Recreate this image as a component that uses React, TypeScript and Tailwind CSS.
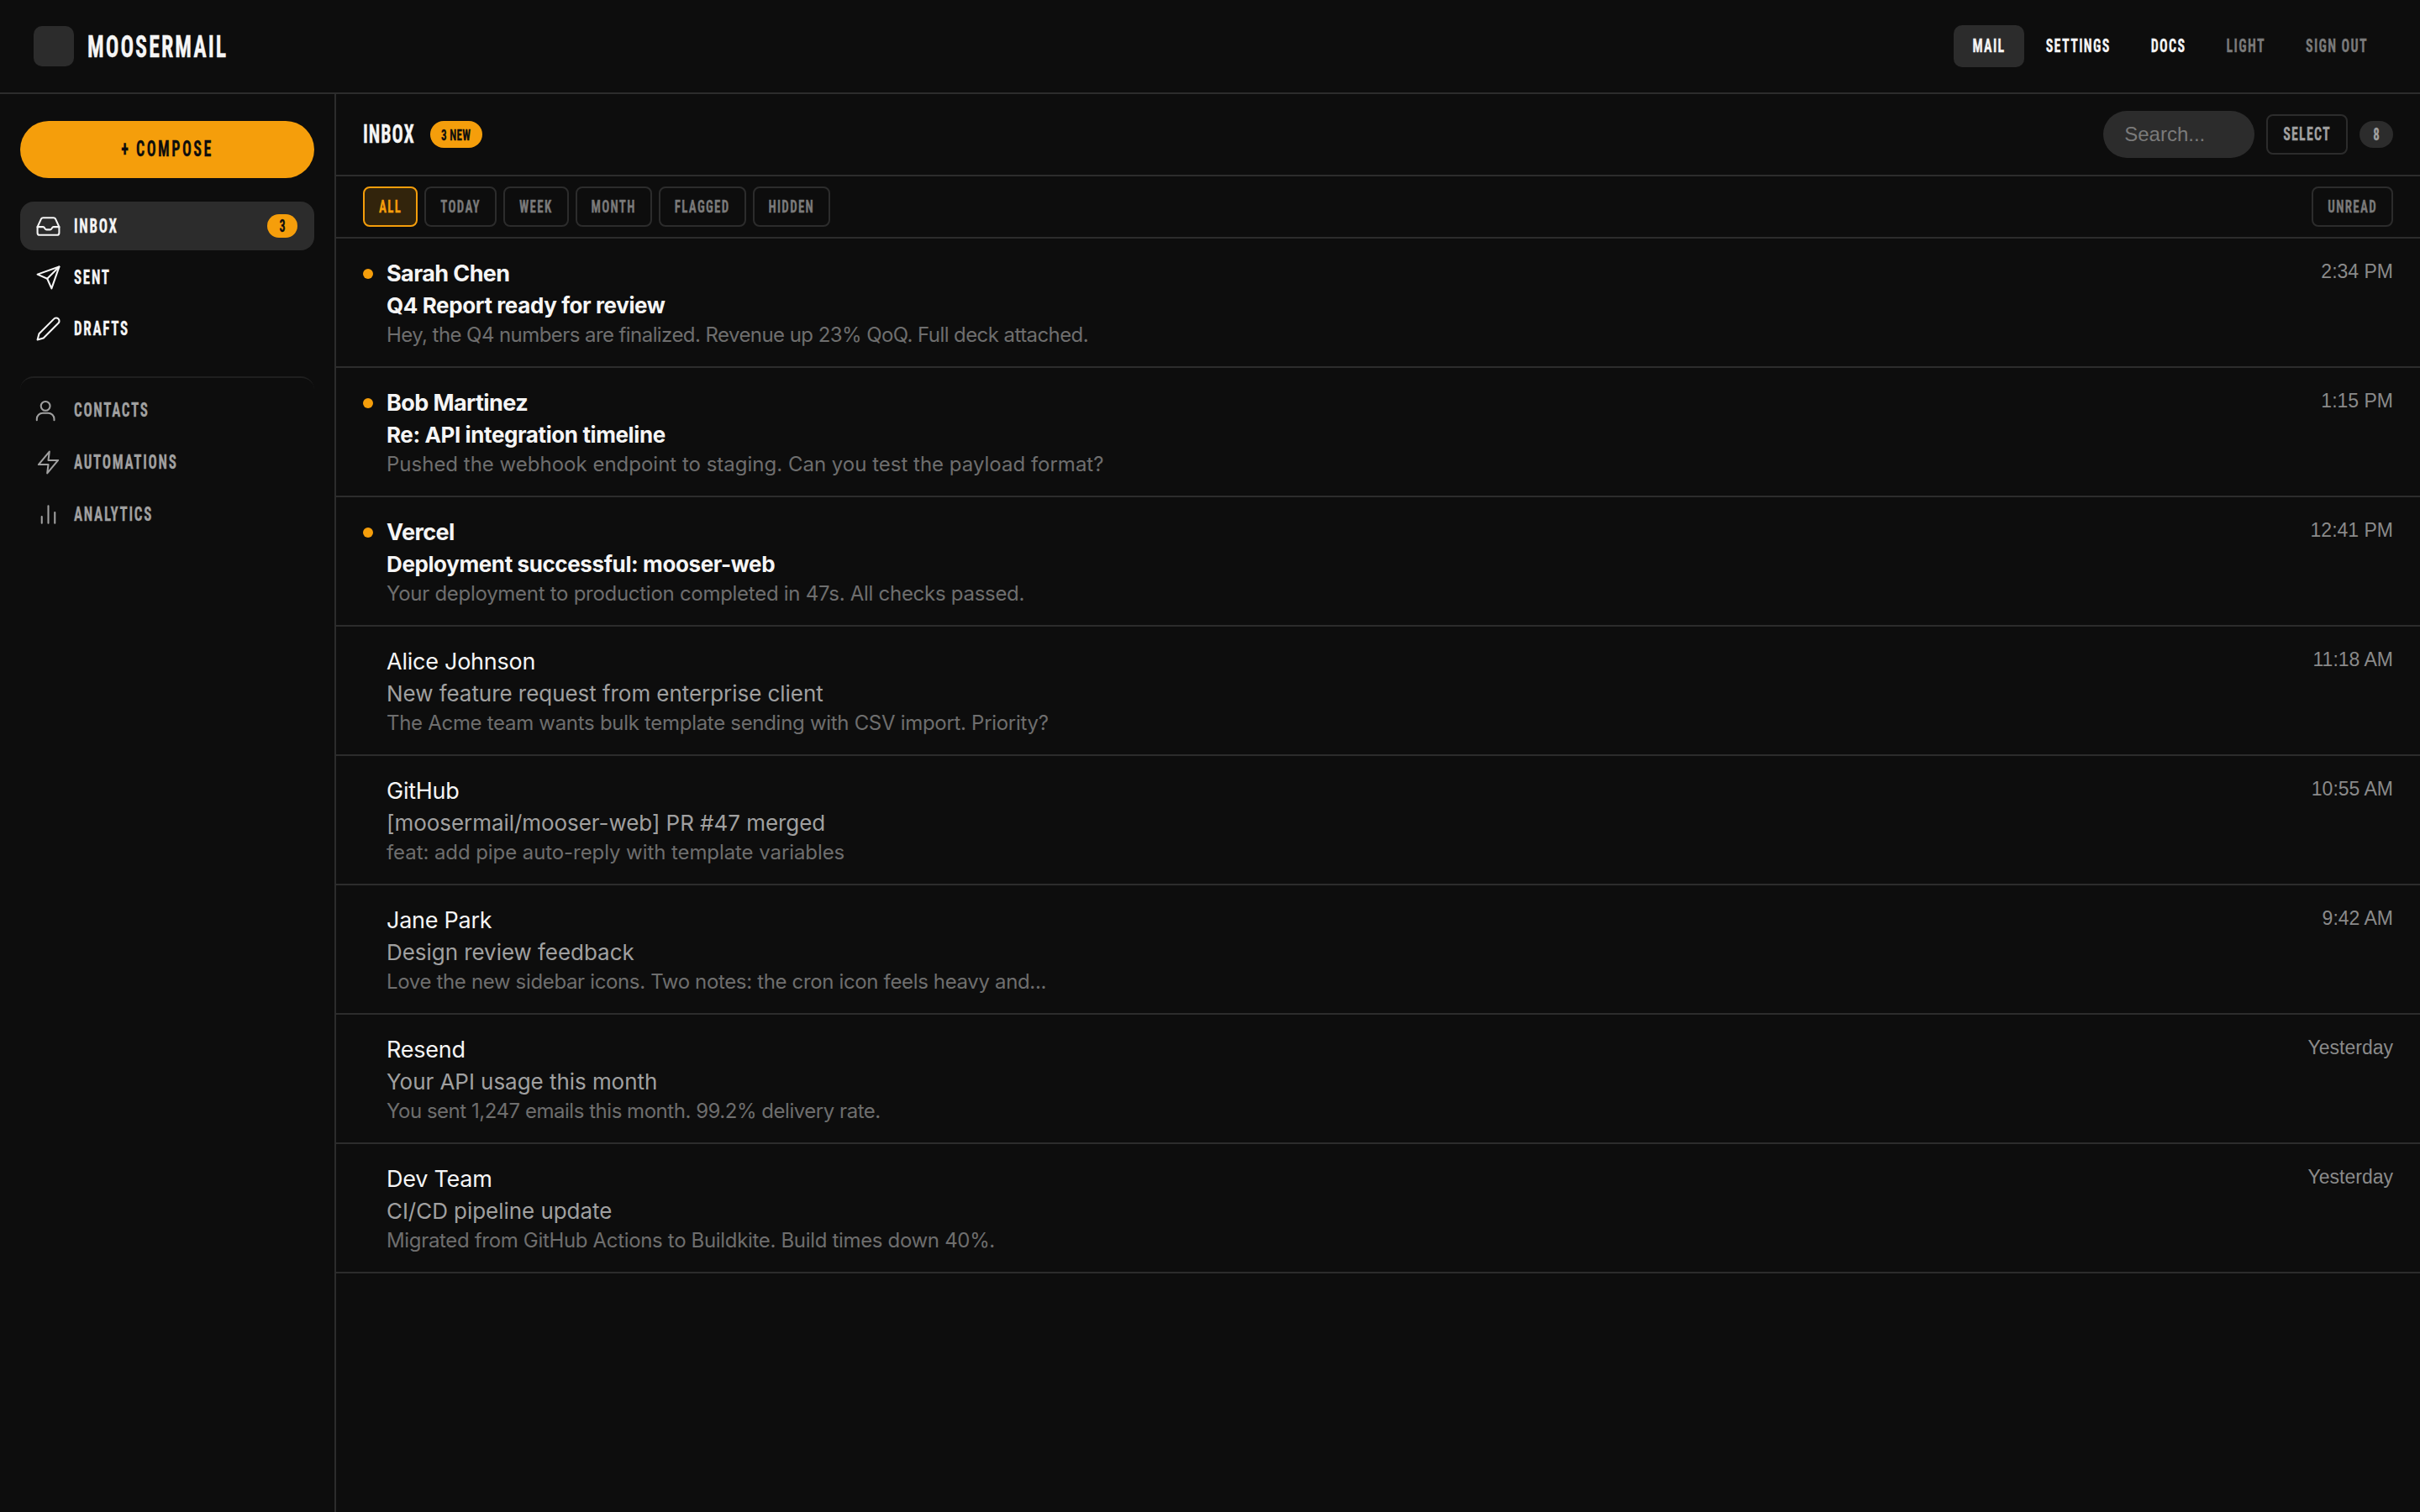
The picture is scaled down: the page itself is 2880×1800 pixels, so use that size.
import type { ReactNode } from 'react'

// condensed caps, stretched vertically to get the tall poster look
function Cap({ className, children }: { className: string; children: ReactNode }) {
  return (
    <span className={`inline-block origin-center scale-y-[1.4] whitespace-nowrap font-['Roboto_Condensed','Roboto',sans-serif] font-bold uppercase leading-none font-stretch-condensed [-webkit-text-stroke:0.2px_currentColor] ${className}`}>
      {children}
    </span>
  )
}

const topNav = [
  { label: 'Mail', cls: 'bg-[#2c2c2c] text-[#f5f5f5]' },
  { label: 'Settings', cls: 'text-[#f5f5f5]' },
  { label: 'Docs', cls: 'text-[#f5f5f5]' },
  { label: 'Light', cls: 'text-[#7a7a7a]' },
  { label: 'Sign out', cls: 'text-[#7a7a7a]' },
]

const filters = ['Today', 'Week', 'Month', 'Flagged', 'Hidden']

const mails = [
  { from: 'Sarah Chen', subject: 'Q4 Report ready for review', preview: 'Hey, the Q4 numbers are finalized. Revenue up 23% QoQ. Full deck attached.', time: '2:34 PM', unread: true, fit: 'tracking-[-0.57px]' },
  { from: 'Bob Martinez', subject: 'Re: API integration timeline', preview: 'Pushed the webhook endpoint to staging. Can you test the payload format?', time: '1:15 PM', unread: true, fit: 'tracking-[0px]' },
  { from: 'Vercel', subject: 'Deployment successful: mooser-web', preview: 'Your deployment to production completed in 47s. All checks passed.', time: '12:41 PM', unread: true, fit: 'tracking-[-0.28px]' },
  { from: 'Alice Johnson', subject: 'New feature request from enterprise client', preview: 'The Acme team wants bulk template sending with CSV import. Priority?', time: '11:18 AM', unread: false, fit: 'tracking-[-0.3px]' },
  { from: 'GitHub', subject: '[moosermail/mooser-web] PR #47 merged', preview: 'feat: add pipe auto-reply with template variables', time: '10:55 AM', unread: false, fit: 'tracking-[-0.08px]' },
  { from: 'Jane Park', subject: 'Design review feedback', preview: 'Love the new sidebar icons. Two notes: the cron icon feels heavy and...', time: '9:42 AM', unread: false, fit: 'tracking-[-0.35px]' },
  { from: 'Resend', subject: 'Your API usage this month', preview: 'You sent 1,247 emails this month. 99.2% delivery rate.', time: 'Yesterday', unread: false, fit: 'tracking-[-0.47px]' },
  { from: 'Dev Team', subject: 'CI/CD pipeline update', preview: 'Migrated from GitHub Actions to Buildkite. Build times down 40%.', time: 'Yesterday', unread: false, fit: 'tracking-[-0.33px]' },
]

function Icon({ children }: { children: ReactNode }) {
  return (
    <svg width="31" height="31" viewBox="0 0 24 24" fill="none" stroke="currentColor" strokeWidth="1.6" strokeLinecap="round" strokeLinejoin="round">
      {children}
    </svg>
  )
}

const icons = {
  inbox: <Icon><path d="M2 12.5h5.2c.6 0 1 .3 1.3.8l.5.9c.3.5.8.8 1.3.8h3.4c.5 0 1-.3 1.3-.8l.5-.9c.3-.5.7-.8 1.3-.8H22" /><path d="M5.4 5.1 2 12.5V18a2 2 0 0 0 2 2h16a2 2 0 0 0 2-2v-5.5l-3.4-7.4A2 2 0 0 0 16.8 4H7.2a2 2 0 0 0-1.8 1.1z" /></Icon>,
  send: <Icon><path d="M22 2 11 13" /><path d="M22 2 15 22 11 13 2 9z" /></Icon>,
  pencil: <Icon><path d="M17 3a2.85 2.85 0 1 1 4 4L7.5 20.5 2 22l1.5-5.5L17 3z" /></Icon>,
  user: <Icon><circle cx="9.4" cy="8" r="4.2" /><path d="M1.4 21v-1a5.5 5.5 0 0 1 5.5-5.5h5a5.5 5.5 0 0 1 5.5 5.5v1" /></Icon>,
  zap: <Icon><path d="M13 2 3 14h9l-1 8 10-12h-9z" /></Icon>,
  bars: <Icon><path d="M18 20V10M12 20V4M6 20v-6" /></Icon>,
}

function NavItem({ icon, label, muted, active, badge }: { icon: ReactNode; label: string; muted?: boolean; active?: boolean; badge?: string }) {
  const color = muted ? 'text-[#a0a0a0]' : 'text-[#f5f5f5]'
  return (
    <div className={`flex h-[58px] items-center rounded-[16px] pl-[18px] pr-[20px] ${active ? 'bg-[#2c2c2c]' : ''}`}>
      <span className={`flex w-[46px] ${color}`}>{icon}</span>
      <Cap className={`text-[17px] tracking-[1.7px] ${color}`}>{label}</Cap>
      {badge && (
        <span className="ml-auto flex h-[28px] w-[36px] items-center justify-center rounded-full bg-[#f59e0b]">
          <Cap className="text-[14px] text-[#0d0d0d]">{badge}</Cap>
        </span>
      )}
    </div>
  )
}

function Chip({ children, active }: { children: string; active?: boolean }) {
  return (
    <span className={`flex h-[48px] items-center rounded-[8px] border-2 px-[17px] ${active ? 'border-[#f59e0b] bg-[#32240c]' : 'border-[#2c2c2c]'}`}>
      <Cap className={`text-[15px] tracking-[1.3px] ${active ? 'text-[#f59e0b]' : 'text-[#7a7a7a]'}`}>{children}</Cap>
    </span>
  )
}

export default function App() {
  return (
    <div className="flex h-[1800px] w-[2880px] flex-col overflow-hidden bg-[#0d0d0d] font-['Inter','Liberation_Sans',sans-serif]">
      <header className="flex h-[112px] shrink-0 items-center justify-between border-b-2 border-[#2c2c2c] pl-[40px] pr-[40px]">
        <div className="flex items-center gap-[16px]">
          <div className="h-[48px] w-[48px] rounded-[10px] bg-[#2c2c2c]" />
          <Cap className="text-[26px] tracking-[2px] text-[#f5f5f5]">MooserMail</Cap>
        </div>
        <nav className="flex items-center gap-[4px]">
          {topNav.map(n => (
            <span key={n.label} className={`flex h-[50px] items-center rounded-[10px] px-[22px] ${n.cls}`}>
              <Cap className="text-[16px] tracking-[1.35px]">{n.label}</Cap>
            </span>
          ))}
        </nav>
      </header>

      <div className="flex min-h-0 flex-1">
        <aside className="flex w-[400px] shrink-0 flex-col border-r-2 border-[#2c2c2c] px-[24px] pt-[32px]">
          <button className="flex h-[68px] items-center justify-center rounded-full bg-[#f59e0b]">
            <Cap className="text-[18px] tracking-[2.5px] text-[#0d0d0d]">+ Compose</Cap>
          </button>
          <div className="mt-[28px] flex flex-col gap-[3px]">
            <NavItem active label="Inbox" badge="3" icon={icons.inbox} />
            <NavItem label="Sent" icon={icons.send} />
            <NavItem label="Drafts" icon={icons.pencil} />
          </div>
          <div className="mt-[28px] flex flex-col gap-[4px] rounded-t-[16px] border-t-2 border-[#1f1f1f] pt-[9px]">
            <NavItem muted label="Contacts" icon={icons.user} />
            <NavItem muted label="Automations" icon={icons.zap} />
            <NavItem muted label="Analytics" icon={icons.bars} />
          </div>
        </aside>

        <main className="flex min-w-0 flex-1 flex-col">
          <div className="flex h-[98px] shrink-0 items-center justify-between border-b-2 border-[#2c2c2c] px-[32px]">
            <div className="flex items-center gap-[18px]">
              <Cap className="text-[22px] tracking-[0.9px] text-[#f5f5f5]">Inbox</Cap>
              <span className="flex h-[32px] w-[62px] items-center justify-center rounded-full bg-[#f59e0b]">
                <Cap className="text-[13px] tracking-[0.3px] text-[#0d0d0d]">3 new</Cap>
              </span>
            </div>
            <div className="flex items-center gap-[14px]">
              <div className="flex h-[56px] w-[180px] items-center rounded-full bg-[#2c2c2c] px-[25px] font-['Liberation_Sans',sans-serif] text-[24px] text-[#7a7a7a]">Search...</div>
              <span className="flex h-[48px] items-center rounded-[8px] border-2 border-[#2c2c2c] px-[18px]">
                <Cap className="text-[16px] tracking-[1.2px] text-[#a0a0a0]">Select</Cap>
              </span>
              <span className="flex h-[32px] w-[40px] items-center justify-center rounded-full bg-[#2c2c2c]">
                <Cap className="text-[15px] text-[#a0a0a0]">8</Cap>
              </span>
            </div>
          </div>

          <div className="flex h-[74px] shrink-0 items-center justify-between border-b-2 border-[#2c2c2c] px-[32px]">
            <div className="flex items-center gap-[8px]">
              <Chip active>All</Chip>
              {filters.map(f => <Chip key={f}>{f}</Chip>)}
            </div>
            <Chip>Unread</Chip>
          </div>

          <div className="flex flex-col">
            {mails.map(m => (
              <div key={m.from} className="flex h-[154px] shrink-0 items-start border-b-2 border-[#2c2c2c] pl-[32px] pr-[32px] pt-[23px]">
                <div className="flex h-[38px] w-[28px] shrink-0 items-center">
                  {m.unread && <span className="h-[12px] w-[12px] rounded-full bg-[#f59e0b]" />}
                </div>
                <div className="min-w-0 flex-1">
                  <div className={`text-[27px] leading-[38px] text-[#f5f5f5] ${m.unread ? 'font-bold tracking-[-0.6px]' : 'tracking-[-0.25px]'}`}>{m.from}</div>
                  <div className={`text-[26px] leading-[38px] ${m.unread ? 'font-bold tracking-[-0.4px] text-[#f5f5f5]' : 'tracking-[-0.05px] text-[#a0a0a0]'}`}>{m.subject}</div>
                  <div className={`text-[24px] leading-[32px] text-[#6e6e6e] ${m.fit}`}>{m.preview}</div>
                </div>
                <span className="font-['Liberation_Sans',sans-serif] text-[23px] leading-[32px] text-[#8a8a8a]">{m.time}</span>
              </div>
            ))}
          </div>
        </main>
      </div>
    </div>
  )
}
